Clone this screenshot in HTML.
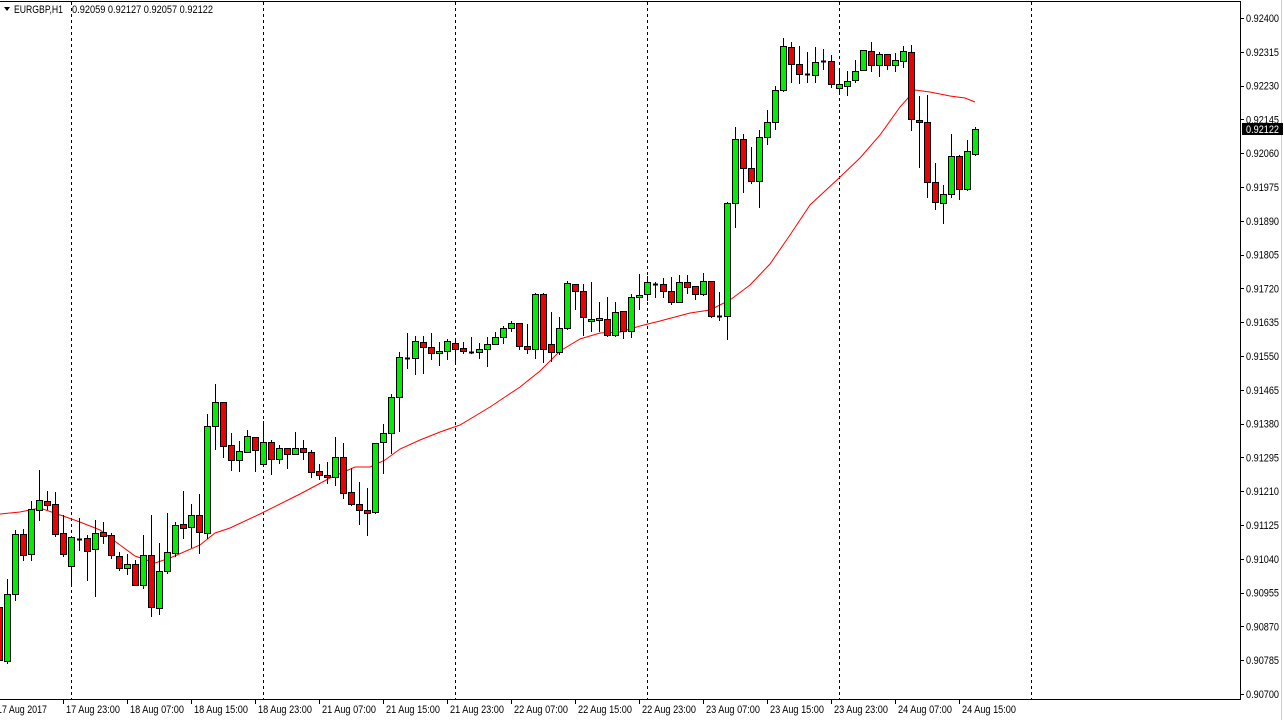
<!DOCTYPE html>
<html><head><meta charset="utf-8"><style>
html,body{margin:0;padding:0;background:#fff;}
body{width:1284px;height:720px;overflow:hidden;position:relative;font-family:"Liberation Sans",sans-serif;}
svg{position:absolute;left:0;top:0;}
text{font-family:"Liberation Sans",sans-serif;font-size:11px;fill:#000;}
</style></head><body>
<svg id="c" width="1284" height="720" xmlns="http://www.w3.org/2000/svg"></svg>
<script>
var S='';
var d=[
[-1,607,660,600,660],[7,661,594,579,663],[15,594,534,530,600],[23,534,555,529,560],[31,554,509,501,560],[39,510,500,470,520],[47,501,505,491,509],[55,504,534,492,536],[63,533,554,515,556],[71,566,537,537,586],[79,539,539,518,550],[87,538,551,535,580],[95,549,533,520,596],[103,532,536,522,543],[111,535,555,533,558],[119,556,568,552,570],[127,568,564,554,574],[135,564,585,560,585],[143,585,555,535,588],[151,555,607,515,616],[159,608,571,543,614],[167,571,552,513,573],[175,553,525,522,556],[183,524,528,491,538],[191,527,515,504,547],[199,515,532,494,553],[207,533,426,414,538],[215,426,402,384,449],[223,402,446,402,457],[231,445,460,433,470],[239,460,451,441,471],[247,452,436,430,452],[255,437,450,437,471],[263,464,442,421,466],[271,442,459,440,474],[279,459,448,445,463],[287,448,454,448,468],[295,454,448,432,454],[303,448,452,440,459],[311,452,472,450,477],[319,471,475,464,479],[327,475,477,462,483],[335,477,457,437,485],[343,457,493,443,498],[351,492,504,468,505],[359,504,510,482,524],[367,510,513,488,535],[375,512,443,443,513],[383,442,433,424,473],[391,433,397,394,453],[399,397,357,352,431],[407,358,358,333,368],[415,358,341,336,374],[423,342,347,336,373],[431,347,353,333,359],[439,353,351,342,365],[447,351,341,339,359],[455,343,349,339,363],[463,348,351,342,353],[471,352,352,337,353],[479,352,349,343,358],[487,349,344,337,366],[495,344,337,332,344],[503,337,328,326,343],[511,328,323,321,331],[519,323,346,323,349],[527,346,349,324,353],[535,349,294,293,358],[543,294,349,293,362],[551,344,352,312,361],[559,352,328,317,354],[567,328,283,281,329],[575,284,291,284,309],[583,291,317,284,335],[591,321,319,282,331],[599,320,318,302,331],[607,319,335,297,336],[615,335,312,302,336],[623,311,331,311,338],[631,331,297,294,337],[639,297,295,274,309],[647,294,282,276,300],[655,284,284,282,297],[663,284,291,278,297],[671,291,302,277,304],[679,302,282,275,302],[687,282,287,275,293],[695,286,294,286,299],[703,294,281,273,295],[711,281,316,281,317],[719,316,316,292,320],[727,316,203,202,339],[735,203,139,127,227],[743,139,168,134,192],[751,168,181,147,183],[759,181,137,130,207],[767,137,122,110,144],[775,122,90,86,129],[783,90,46,38,91],[791,47,64,42,82],[799,64,74,46,83],[807,74,74,52,82],[815,75,62,47,82],[823,61,61,49,69],[831,61,84,55,87],[839,88,84,71,93],[847,86,81,71,95],[855,80,71,60,82],[863,70,50,50,70],[871,51,65,42,71],[879,65,54,52,76],[887,54,65,54,69],[895,65,60,53,71],[903,61,51,46,67],[911,52,119,45,130],[919,120,122,96,167],[927,122,182,95,197],[935,182,202,163,209],[943,203,194,185,223],[951,194,156,134,197],[959,156,189,155,199],[967,189,151,140,190],[975,154,129,127,155]];
S+='<rect x="0" y="0" width="1284" height="720" fill="#fff"/>';
S+='<line x1="0" y1="1.5" x2="1241" y2="1.5" stroke="#000"/>';
S+='<line x1="1240.5" y1="1" x2="1240.5" y2="700" stroke="#000"/>';
S+='<line x1="0" y1="699.5" x2="1241" y2="699.5" stroke="#000"/>';
S+='<line x1="1281.5" y1="0" x2="1281.5" y2="720" stroke="#ccc"/>';
[71,263,455,647,839,1031].forEach(function(x){S+='<line x1="'+(x+0.5)+'" y1="2" x2="'+(x+0.5)+'" y2="699" stroke="#000" stroke-dasharray="3,3"/>';});
var ma=[[0,514],[20,512],[40,508],[63,516],[80,522],[100,530],[120,545],[135,556],[155,563],[170,558],[200,545],[215,533],[230,528],[260,514],[300,494],[330,478],[355,467],[370,467],[385,460],[400,449],[420,440],[440,432],[460,425],[490,407],[520,387],[540,371],[560,351],[580,339],[600,333],[620,332],[640,326],[660,321],[690,313],[710,310],[730,300],[750,285],[770,264],[790,235],[810,205],[839,178],[860,158],[880,135],[900,107],[915,90],[930,92],[950,96],[965,98],[975,102]];
S+='<polyline fill="none" stroke="#f00" stroke-width="1" points="'+ma.map(function(p){return p.join(',')}).join(' ')+'"/>';
d.forEach(function(c){var x=c[0],o=c[1],cl=c[2],h=c[3],l=c[4];
S+='<line x1="'+(x+0.5)+'" y1="'+h+'" x2="'+(x+0.5)+'" y2="'+(l+1)+'" stroke="#000"/>';
var t=Math.min(o,cl),b=Math.max(o,cl);
if(b-t<1){S+='<line x1="'+(x-2)+'" y1="'+(t+0.5)+'" x2="'+(x+3)+'" y2="'+(t+0.5)+'" stroke="#000" stroke-width="2"/>';}
else{var col=cl<o?'#00ee00':'#ee0000';S+='<rect x="'+(x-2.5)+'" y="'+(t+0.5)+'" width="6" height="'+(b-t)+'" fill="'+col+'" stroke="#000"/>';}
});
for(var i=0;i<21;i++){var y=18+i*33.8;var p=(0.924-i*0.00085).toFixed(5);
S+='<line x1="1241" y1="'+(Math.round(y)+0.5)+'" x2="1244" y2="'+(Math.round(y)+0.5)+'" stroke="#000"/>';
S+='<text x="1246" y="'+(y+4)+'" textLength="33" lengthAdjust="spacingAndGlyphs">'+p+'</text>';}
S+='<rect x="1242" y="123" width="41" height="12" fill="#000"/><text x="1246" y="133" textLength="33" lengthAdjust="spacingAndGlyphs" style="fill:#fff">0.92122</text>';
var lab=['17 Aug 2017','17 Aug 23:00','18 Aug 07:00','18 Aug 15:00','18 Aug 23:00','21 Aug 07:00','21 Aug 15:00','21 Aug 23:00','22 Aug 07:00','22 Aug 15:00','22 Aug 23:00','23 Aug 07:00','23 Aug 15:00','23 Aug 23:00','24 Aug 07:00','24 Aug 15:00'];
lab.forEach(function(s,i){var x=i==0?-3:63+(i-1)*64;
if(i>0)S+='<line x1="'+(x+0.5)+'" y1="700" x2="'+(x+0.5)+'" y2="704" stroke="#000"/>';
S+='<text x="'+(x+(i?3:0))+'" y="713" textLength="'+(i?54:50)+'" lengthAdjust="spacingAndGlyphs">'+s+'</text>';});
S+='<polygon points="4,7 10,7 7,11" fill="#000"/>';
S+='<text x="14" y="13" textLength="49" lengthAdjust="spacingAndGlyphs">EURGBP,H1</text>';
S+='<text x="72" y="13" textLength="141" lengthAdjust="spacingAndGlyphs">0.92059 0.92127 0.92057 0.92122</text>';
document.getElementById('c').innerHTML=S;
</script>
</body></html>
